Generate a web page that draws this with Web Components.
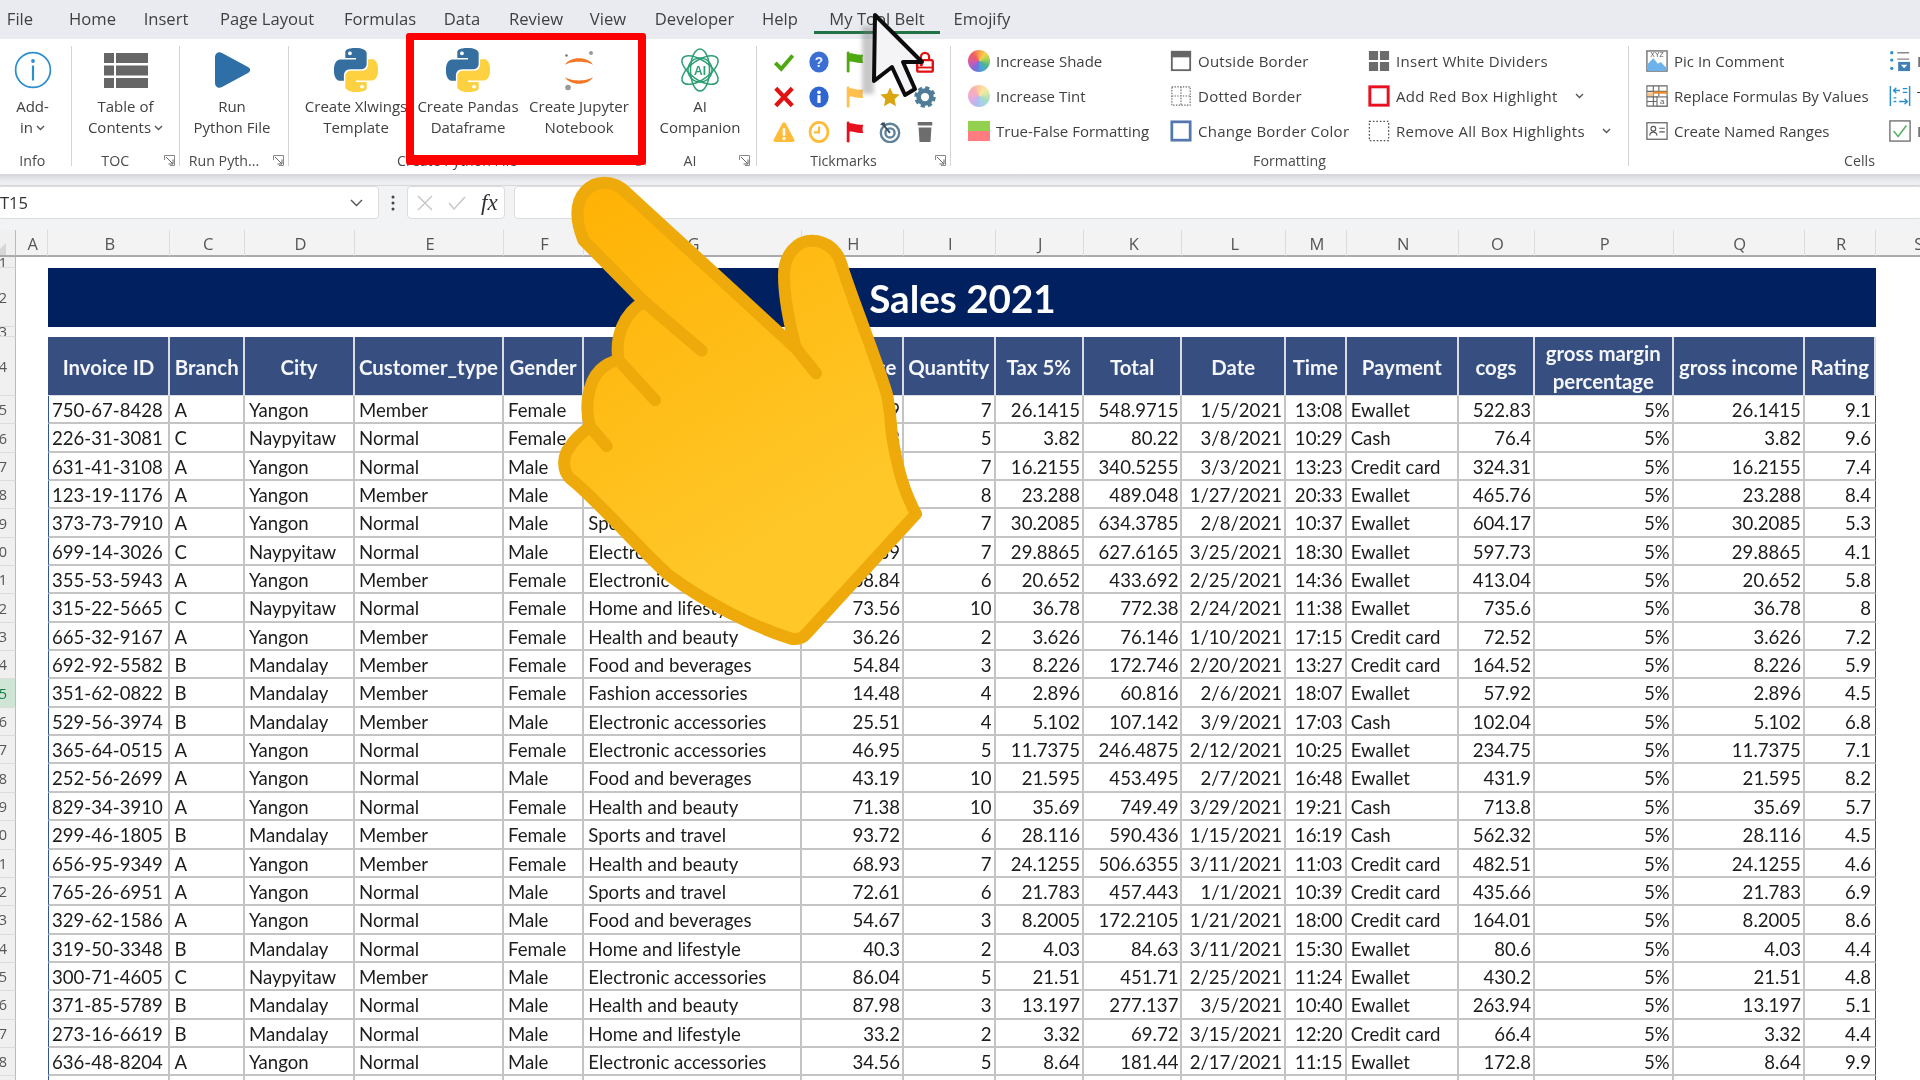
<!DOCTYPE html>
<html>
<head>
<meta charset="utf-8">
<title>Sales 2021</title>
<style>
  html, body { margin: 0; height: 1080px; overflow: hidden; background: #fff; }
  body { position: relative; font-family: "Open Sans", "Liberation Sans", sans-serif; width: 1920px; filter: blur(.35px); }
  .up { vertical-align: 2px; margin-left: 3px; }
</style>
</head>
<body>
<xl-tabs></xl-tabs>

<xl-ribbon>
  <rb-group w="71.5" label="Info" foot-pad="6">
    <rb-big w="65"><xl-icon slot="icon" name="info" w="38" h="38"></xl-icon>Add-<br>in<xl-icon name="chev" w="9" h="6" class="up"></xl-icon></rb-big>
  </rb-group>
  <rb-group w="108.5" label="TOC" launcher>
    <rb-big w="108"><xl-icon slot="icon" name="toc" w="44" h="35"></xl-icon>Table of<br>Contents<xl-icon name="chev" w="9" h="6" class="up"></xl-icon></rb-big>
  </rb-group>
  <rb-group w="109" label="Run Pyth..." launcher>
    <rb-big w="104"><xl-icon slot="icon" name="play" w="36" h="36"></xl-icon>Run<br>Python File</rb-big>
  </rb-group>
  <rb-group w="357" label="Create Python File" launcher pad="11">
    <rb-big w="112"><xl-icon slot="icon" name="python" w="44" h="44"></xl-icon>Create Xlwings<br>Template</rb-big>
    <rb-big w="112"><xl-icon slot="icon" name="python" w="44" h="44"></xl-icon>Create Pandas<br>Dataframe</rb-big>
    <rb-big w="110"><xl-icon slot="icon" name="jupyter" w="30" h="41"></xl-icon>Create Jupyter<br>Notebook</rb-big>
  </rb-group>
  <rb-group w="111" label="AI" launcher pad="0" foot-pad="2">
    <rb-big w="108"><xl-icon slot="icon" name="ai" w="44" h="44"></xl-icon>AI<br>Companion</rb-big>
  </rb-group>
  <rb-group w="194" label="Tickmarks" launcher>
    <rb-ticks>
      <xl-icon name="check"></xl-icon><xl-icon name="help"></xl-icon><xl-icon name="flagGreen"></xl-icon><xl-icon name="flagYellow"></xl-icon><xl-icon name="lock"></xl-icon>
      <xl-icon name="cross"></xl-icon><xl-icon name="infoFill"></xl-icon><xl-icon name="flagYellow"></xl-icon><xl-icon name="star"></xl-icon><xl-icon name="gear"></xl-icon>
      <xl-icon name="warn"></xl-icon><xl-icon name="clock"></xl-icon><xl-icon name="flagRed"></xl-icon><xl-icon name="target"></xl-icon><xl-icon name="trash"></xl-icon>
    </rb-ticks>
  </rb-group>
  <rb-group w="678" label="Formatting" pad="17">
    <rb-col w="202">
      <rb-small><xl-icon slot="icon" name="wheel"></xl-icon>Increase Shade</rb-small>
      <rb-small><xl-icon slot="icon" name="wheelTint"></xl-icon>Increase Tint</rb-small>
      <rb-small><xl-icon slot="icon" name="trueFalse"></xl-icon>True-False Formatting</rb-small>
    </rb-col>
    <rb-col w="198" ls=".25">
      <rb-small><xl-icon slot="icon" name="outside"></xl-icon>Outside Border</rb-small>
      <rb-small><xl-icon slot="icon" name="dotted"></xl-icon>Dotted Border</rb-small>
      <rb-small><xl-icon slot="icon" name="borderColor"></xl-icon>Change Border Color</rb-small>
    </rb-col>
    <rb-col w="250" ls=".3">
      <rb-small><xl-icon slot="icon" name="dividers"></xl-icon>Insert White Dividers</rb-small>
      <rb-small drop><xl-icon slot="icon" name="redBox"></xl-icon>Add Red Box Highlight</rb-small>
      <rb-small drop><xl-icon slot="icon" name="noBox"></xl-icon>Remove All Box Highlights</rb-small>
    </rb-col>
  </rb-group>
  <rb-group w="462" label="Cells" pad="17">
    <rb-col w="243">
      <rb-small><xl-icon slot="icon" name="pic"></xl-icon>Pic In Comment</rb-small>
      <rb-small><xl-icon slot="icon" name="replace"></xl-icon>Replace Formulas By Values</rb-small>
      <rb-small><xl-icon slot="icon" name="named"></xl-icon>Create Named Ranges</rb-small>
    </rb-col>
    <rb-col w="150">
      <rb-small><xl-icon slot="icon" name="list"></xl-icon>I</rb-small>
      <rb-small><xl-icon slot="icon" name="indent"></xl-icon>T</rb-small>
      <rb-small><xl-icon slot="icon" name="tick"></xl-icon>I</rb-small>
    </rb-col>
  </rb-group>
</xl-ribbon>

<xl-formula-bar cell="T15"></xl-formula-bar>
<xl-sheet></xl-sheet>

<red-box></red-box>
<hand-pointer></hand-pointer>
<mouse-cursor></mouse-cursor>

<script>
const pyBlue = 'M14.25.18l.9.2.73.26.59.3.45.32.34.34.25.34.16.33.1.3.04.26.02.2-.01.13V8.5l-.05.63-.13.55-.21.46-.26.38-.3.31-.33.25-.35.19-.35.14-.33.1-.3.07-.26.04-.21.02H8.77l-.69.05-.59.14-.5.22-.41.27-.33.32-.27.35-.2.36-.15.37-.1.35-.07.32-.04.27-.02.21v3.06H3.17l-.21-.03-.28-.07-.32-.12-.35-.18-.36-.26-.36-.36-.35-.46-.32-.59-.28-.73-.21-.88-.14-1.05-.05-1.23.06-1.22.16-1.04.24-.87.32-.71.36-.57.4-.44.42-.33.42-.24.4-.16.36-.1.32-.05.24-.01h.16l.06.01h8.16v-.83H6.18l-.01-2.75-.02-.37.05-.34.11-.31.17-.28.25-.26.31-.23.38-.2.44-.18.51-.15.58-.12.64-.1.71-.06.77-.04.84-.02 1.27.05zm-6.3 1.98l-.23.33-.08.41.08.41.23.34.33.22.41.09.41-.09.33-.22.23-.34.08-.41-.08-.41-.23-.33-.33-.22-.41-.09-.41.09z'
const pyYellow = 'M21.04 6.11l.28.06.32.12.35.18.36.27.36.35.35.47.32.59.28.73.21.88.14 1.04.05 1.23-.06 1.23-.16 1.04-.24.86-.32.71-.36.57-.4.45-.42.33-.42.24-.4.16-.36.09-.32.05-.24.02-.16-.01h-8.22v.82h5.84l.01 2.76.02.36-.05.34-.11.31-.17.29-.25.25-.31.24-.38.2-.44.17-.51.15-.58.13-.64.09-.71.07-.77.04-.84.01-1.27-.04-1.07-.14-.9-.2-.73-.25-.59-.3-.45-.33-.34-.34-.25-.34-.16-.33-.1-.3-.04-.25-.02-.2.01-.13v-5.34l.05-.64.13-.54.21-.46.26-.38.3-.32.33-.24.35-.2.35-.14.33-.1.3-.06.26-.04.21-.02.13-.01h5.84l.69-.05.59-.14.5-.21.41-.28.33-.32.27-.35.2-.36.15-.36.1-.35.07-.32.04-.28.02-.21V6.07h2.09l.14.01zm-6.47 14.25l-.23.33-.08.41.08.41.23.33.33.23.41.08.41-.08.33-.23.23-.33.08-.41-.08-.41-.23-.33-.33-.23-.41-.08-.41.08z'
const flag = c => `<path d="M4.5 2v20" stroke="${c}" stroke-width="3" stroke-linecap="round"/><path d="M5 3c4-2 7 2 16 1-1 3-1 6 0 9-8 1-12-3-16-1z" fill="${c}"/>`
const wheel = stops => `<foreignObject width="24" height="24"><div xmlns="http://www.w3.org/1999/xhtml" style="width:24px;height:24px;border-radius:50%;background:conic-gradient(${stops})"></div></foreignObject>`

const ICONS = {
  chev: ['0 0 9 6', '<path d="M1 1l3.5 3.5L8 1" fill="none" stroke="#555" stroke-width="1.4"/>'],
  info: ['0 0 38 38', '<circle cx="19" cy="19" r="17.4" fill="#fff" stroke="#2b8fce" stroke-width="1.7"/><circle cx="19" cy="10" r="1.9" fill="#2b8fce"/><rect x="17.9" y="14.5" width="2.2" height="15" fill="#2b8fce"/>'],
  toc: ['0 0 44 35', '<path fill="#666" d="M0 0h10v10H0zM12 0h32v10H12zM0 12.5h10v10H0zM12 12.5h32v10H12zM0 25h10v10H0zM12 25h32v10H12z"/>'],
  play: ['0 0 36 36', '<path fill="#2f6fa8" d="M1 5c0-4 4-6 7-4l26 14c3 2 3 4 0 6L8 35c-3 2-7 0-7-4z"/>'],
  python: ['0 0 24 24', `<path fill="#356f9f" fill-rule="evenodd" d="${pyBlue}"/><path fill="#fdd140" fill-rule="evenodd" d="${pyYellow}"/>`],
  jupyter: ['0 0 30 41', '<path fill="#f37726" d="M1 15C5 6 25 6 29 15 24 10.5 6 10.5 1 15zM1 27c5 4.5 23 4.5 28 0-4 9-24 9-28 0z"/><circle cx="27" cy="3" r="2" fill="#9a9a9a"/><circle cx="2.5" cy="5.5" r="1.3" fill="#777"/><circle cx="4" cy="37.5" r="2.8" fill="#9a9a9a"/>'],
  ai: ['0 0 44 44', '<g fill="none" stroke="#2e9f73" stroke-width="1.5"><ellipse cx="22" cy="22" rx="21" ry="9.5" transform="rotate(35 22 22)"/><ellipse cx="22" cy="22" rx="21" ry="9.5" transform="rotate(90 22 22)"/><ellipse cx="22" cy="22" rx="21" ry="9.5" transform="rotate(145 22 22)"/><circle cx="22" cy="22" r="12"/></g><text x="22" y="26.5" font-family="Liberation Sans" font-size="12" font-weight="700" fill="#2e9f73" text-anchor="middle">AI</text>'],
  check: ['0 0 24 24', '<path d="M2.5 13l6.5 6.5L21.5 5" fill="none" stroke="#4ea80f" stroke-width="4.2"/>'],
  help: ['0 0 24 24', '<ellipse cx="12" cy="12" rx="10.5" ry="11.5" fill="#3b6fd4"/><text x="12" y="17.5" font-family="Liberation Sans" font-size="15" font-weight="700" fill="#e8eefc" text-anchor="middle">?</text>'],
  infoFill: ['0 0 24 24', '<ellipse cx="12" cy="12" rx="10.5" ry="11.5" fill="#2f66cf"/><circle cx="12" cy="6.8" r="2" fill="#fff"/><rect x="10.3" y="10" width="3.4" height="8.5" fill="#fff"/>'],
  flagGreen: ['0 0 24 24', flag('#4ea80f')],
  flagYellow: ['0 0 24 24', flag('#ffc04d')],
  flagRed: ['0 0 24 24', flag('#e80f1e')],
  cross: ['0 0 24 24', '<path d="M3 2.5l18 19M21 2.5l-18 19" stroke="#e01212" stroke-width="4.6"/>'],
  lock: ['0 0 24 24', '<path d="M7.5 10V6.5a4.5 4.5 0 0 1 9 0V10" fill="none" stroke="#e01212" stroke-width="2.4"/><rect x="3.5" y="10" width="17" height="12.5" rx="1.5" fill="#fff" stroke="#e01212" stroke-width="2.6"/><circle cx="8" cy="15" r="1.8" fill="#e01212"/><rect x="3.5" y="17" width="17" height="2" fill="#e01212"/>'],
  star: ['0 0 24 24', '<path fill="#d9a510" d="M12 1.5l3.2 6.9 7.3.9-5.4 5.1 1.4 7.6-6.5-3.7-6.5 3.7 1.4-7.6L1.5 9.3l7.3-.9z"/>'],
  gear: ['0 0 24 24', '<circle cx="12" cy="12" r="10" fill="none" stroke="#4f7d98" stroke-width="3.5" stroke-dasharray="4.5 3.35"/><circle cx="12" cy="12" r="7" fill="none" stroke="#4f7d98" stroke-width="5"/>'],
  warn: ['0 0 24 24', '<path fill="#ffbb3a" d="M10.2 2.5c.9-1.6 2.7-1.6 3.6 0l9.3 17.5c.8 1.5-.2 3-1.8 3H2.7c-1.6 0-2.6-1.5-1.8-3z"/><rect x="10.6" y="8" width="2.8" height="8" fill="#fff"/><circle cx="12" cy="19" r="1.7" fill="#fff"/>'],
  clock: ['0 0 24 24', '<ellipse cx="12" cy="12" rx="9.8" ry="10.5" fill="none" stroke="#ffbb3a" stroke-width="3"/><path d="M12 6v6.5H6.5" fill="none" stroke="#ffbb3a" stroke-width="2.4"/>'],
  target: ['0 0 24 24', '<circle cx="12" cy="13" r="10" fill="none" stroke="#5f8199" stroke-width="2.6"/><circle cx="12" cy="13" r="5" fill="none" stroke="#5f8199" stroke-width="2.6"/><path d="M12 13L3 2" stroke="#3a4f5f" stroke-width="2"/><path d="M1 4l5-3 1 4z" fill="#3a4f5f"/>'],
  trash: ['0 0 24 24', '<rect x="4" y="1" width="16" height="4" rx="1" fill="#6d6d6d"/><path fill="#6d6d6d" d="M5 7h14l-1 16H6z"/>'],
  wheel: ['0 0 24 24', wheel('#f6a04d,#f7d14a,#a6d25a,#4db58c,#4da3d8,#6f70d8,#b45ec8,#e45a8c,#ef5f5f,#f6a04d')],
  wheelTint: ['0 0 24 24', wheel('#fbcf9f,#fbe89f,#d2e8a8,#a6dcc5,#a6d1ec,#b7b8ec,#d9aee4,#f2accc,#f7afaf,#fbcf9f')],
  trueFalse: ['0 0 24 24', '<rect width="24" height="11" y="1" fill="#92d050"/><rect width="24" height="11" y="12" fill="#ff7c80"/>'],
  outside: ['0 0 24 24', '<rect x="2" y="2" width="20" height="20" fill="#fff" stroke="#666" stroke-width="2"/><rect x="1" y="1" width="22" height="7" fill="#666"/>'],
  dotted: ['0 0 24 24', '<path d="M2 2h20v20H2zM12 2v20M2 12h20" fill="none" stroke="#666" stroke-width="1.2" stroke-dasharray="1.5 1.5"/>'],
  borderColor: ['0 0 24 24', '<rect x="2" y="2" width="20" height="20" fill="#fff" stroke="#5478ad" stroke-width="3"/>'],
  dividers: ['0 0 24 24', '<path fill="#6b6b6b" d="M1 1h10v10H1zM13 1h10v10H13zM1 13h10v10H1zM13 13h10v10H13z"/>'],
  redBox: ['0 0 24 24', '<rect x="2" y="2" width="20" height="20" fill="#fff" stroke="#e8101e" stroke-width="3.2"/>'],
  noBox: ['0 0 24 24', '<rect x="1.5" y="1.5" width="21" height="21" fill="none" stroke="#555" stroke-width="1.4" stroke-dasharray="1.8 2"/>'],
  pic: ['0 0 24 24', '<rect x="1" y="1" width="22" height="22" fill="#fff" stroke="#666" stroke-width="1.4"/><path fill="#6db2ea" d="M2 23v-8l6-6 5 6 3-2 6 6v4z"/><text x="12" y="7.5" font-family="Liberation Sans" font-size="7.5" fill="#555" text-anchor="middle">XYZ</text>'],
  replace: ['0 0 24 24', '<path d="M1 1h22v22H1zM1 7h22M1 13h12M1 18h12M8 1v22M14 1v11" fill="none" stroke="#666" stroke-width="1.2"/><rect x="8" y="7" width="15" height="2.5" fill="#ed8b2c"/><rect x="2" y="8" width="6" height="4" fill="#f6c48a"/><rect x="12" y="13" width="11" height="10" fill="#fff" stroke="#666" stroke-width="1.2"/><text x="17.5" y="21" font-family="Liberation Sans" font-size="8.5" fill="#555" text-anchor="middle">a</text>'],
  named: ['0 0 24 24', '<rect x="1" y="3" width="22" height="18" fill="#fff" stroke="#666" stroke-width="1.4"/><circle cx="8" cy="9.5" r="2.6" fill="none" stroke="#555" stroke-width="1.2"/><path d="M4 17c.5-5 7.5-5 8 0" fill="none" stroke="#555" stroke-width="1.2"/><path d="M14.5 9h6M14.5 13h6" stroke="#555" stroke-width="1.2"/>'],
  list: ['0 0 24 24', '<circle cx="3" cy="3" r="1.8" fill="#2b8fce"/><circle cx="3" cy="11" r="1.8" fill="#2b8fce"/><circle cx="3" cy="20" r="1.8" fill="#2b8fce"/><path d="M9 3h13M9 10h13" stroke="#888" stroke-width="1.5"/><path fill="#3f7fb5" d="M10 13h13v10H10z"/><path fill="#fff" d="M13 16h7l-3.5 4z"/>'],
  indent: ['0 0 24 24', '<path d="M1.5 1v22M22.5 1v22" stroke="#2b8fce" stroke-width="1.6"/><path d="M5 6h7M8 3L5 6l3 3M15 4h5M15 8h5M5 14h3M5 18h3M11 18h9M17 15l3 3-3 3" fill="none" stroke="#2b8fce" stroke-width="1.5"/>'],
  tick: ['0 0 24 24', '<rect x="1" y="1" width="22" height="22" fill="#fff" stroke="#666" stroke-width="1.4"/><path d="M5 12l5 6 9-12" fill="none" stroke="#58b368" stroke-width="1.8"/>']
}

class XlIcon extends HTMLElement {
  connectedCallback() {
    const w = this.getAttribute('w') || 22
    const h = this.getAttribute('h') || w
    const [box, body] = ICONS[this.getAttribute('name')]
    this.attachShadow({ mode: 'open' }).innerHTML = `
      <style>:host { display: inline-block; width: ${w}px; height: ${h}px; line-height: 0; } svg { width: 100%; height: 100%; display: block; }</style>
      <svg viewBox="${box}" preserveAspectRatio="none">${body}</svg>`
  }
}

const TABS = [['File', 40, 12], ['Home', 81], ['Insert', 66], ['Page Layout', 136], ['Formulas', 90], ['Data', 74], ['Review', 74], ['View', 70], ['Developer', 103], ['Help', 68], ['My Tool Belt', 126], ['Emojify', 84]]

class XlTabs extends HTMLElement {
  connectedCallback() {
    const tabs = TABS.map(([t, w, m]) =>
      `<div class="tab${t === 'My Tool Belt' ? ' on' : ''}" style="width:${w}px;margin-right:${m || 0}px">${t}</div>`).join('')
    this.attachShadow({ mode: 'open' }).innerHTML = `
      <style>
        :host { display: flex; height: 39px; background: #e9ebf0; color: #3f3f3f; font: 16.6px "Open Sans", sans-serif; }
        .tab { height: 34px; line-height: 38px; text-align: center; box-sizing: border-box; white-space: nowrap; }
        .on { border-bottom: 3px solid #217346; }
      </style>${tabs}`
  }
}

class XlRibbon extends HTMLElement {
  constructor() {
    super()
    this.attachShadow({ mode: 'open' }).innerHTML = `
      <style>
        :host { display: flex; height: 135px; width: 1920px; overflow: hidden; background: #fff; color: #404040; font: 15px/21px "Open Sans", sans-serif; position: relative; }
      </style><slot></slot>`
  }
}

class RbGroup extends HTMLElement {
  connectedCallback() {
    const launcher = this.hasAttribute('launcher')
    this.attachShadow({ mode: 'open' }).innerHTML = `
      <style>
        :host { display: block; flex: none; width: ${this.getAttribute('w')}px; height: 135px; }
        .box { height: 120px; margin-top: 7px; border-right: 1px solid #d4d4d4; display: flex; flex-direction: column; box-sizing: border-box; }
        .body { flex: 1; display: flex; padding-left: ${this.getAttribute('pad') || 0}px; min-height: 0; }
        .foot { flex: none; height: 20px; margin-bottom: -4px; display: flex; align-items: center; color: #4a4a4a; font-size: 14.2px; white-space: nowrap; padding-right: ${this.getAttribute('foot-pad') || 0}px; }
        .foot span { flex: 1; text-align: center; }
        .launch { flex: none; width: 20px; height: 20px; display: flex; align-items: center; justify-content: center; }
      </style>
      <div class="box">
        <div class="body"><slot></slot></div>
        <div class="foot"><span>${this.getAttribute('label')}</span>
          ${launcher ? '<div class="launch"><svg width="11" height="11" viewBox="0 0 11 11" fill="none" stroke="#666"><path d="M.5 5V.5H10.5V10.5H6" stroke="#888"/><path d="M2 2l7 7M4.5 9H9V4.5"/></svg></div>' : ''}
        </div>
      </div>`
  }
}

class RbBig extends HTMLElement {
  connectedCallback() {
    this.attachShadow({ mode: 'open' }).innerHTML = `
      <style>
        :host { display: flex; flex: none; flex-direction: column; align-items: center; width: ${this.getAttribute('w')}px; padding-top: 2px; }
        .ic { height: 44px; display: flex; align-items: center; justify-content: center; }
        .tx { margin-top: 4px; text-align: center; white-space: nowrap; line-height: 21px; }
      </style>
      <div class="ic"><slot name="icon"></slot></div>
      <div class="tx"><slot></slot></div>`
  }
}

class RbCol extends HTMLElement {
  connectedCallback() {
    this.attachShadow({ mode: 'open' }).innerHTML = `
      <style>:host { display: flex; flex: none; flex-direction: column; width: ${this.getAttribute('w')}px; margin-top: -2.5px; letter-spacing: ${this.getAttribute('ls') || 0}px; }</style><slot></slot>`
  }
}

class RbSmall extends HTMLElement {
  connectedCallback() {
    const drop = this.hasAttribute('drop')
    this.attachShadow({ mode: 'open' }).innerHTML = `
      <style>
        :host { display: flex; align-items: center; height: 35px; white-space: nowrap; }
        .ic { width: 22px; height: 22px; margin-right: 6px; flex: none; }
        svg { margin-left: 17px; }
      </style>
      <div class="ic"><slot name="icon"></slot></div><slot></slot>
      ${drop ? '<svg width="9" height="6" viewBox="0 0 9 6"><path d="M1 1l3.5 3.5L8 1" fill="none" stroke="#555" stroke-width="1.4"/></svg>' : ''}`
  }
}

class RbTicks extends HTMLElement {
  constructor() {
    super()
    this.attachShadow({ mode: 'open' }).innerHTML = `
      <style>
        :host { display: grid; grid-template-columns: repeat(5, 35.3px); grid-auto-rows: 35px; place-items: center; margin: -1.5px 0 0 9.5px; }
      </style><slot></slot>`
  }
}

class XlFormulaBar extends HTMLElement {
  connectedCallback() {
    this.attachShadow({ mode: 'open' }).innerHTML = `
      <style>
        :host { display: block; height: 56px; background: #f2f3f5; font-family: "Open Sans", sans-serif; color: #333; box-sizing: border-box; }
        .shade { height: 12px; background: linear-gradient(#d4d5d9, #eceef1 70%); border-bottom: 1px solid #d8d8da; box-sizing: border-box; }
        .row { display: flex; height: 33px; }
        .box { background: #fff; border: 1px solid #dcdcdc; border-radius: 4px; box-sizing: border-box; height: 33px; display: flex; align-items: center; }
        .name { width: 381px; margin-left: -2px; flex: none; padding-left: 1px; font-size: 16.5px; }
        .name svg { margin-left: auto; margin-right: 15px; }
        .dots { width: 28px; display: flex; justify-content: center; align-items: center; }
        .fn { width: 98px; flex: none; }
        .fn i { font: italic 400 23px "Liberation Serif", serif; color: #333; margin-left: 15px; }
        .fx { flex: 1; margin: 0 -2px 0 8.5px; }
      </style>
      <div class="shade"></div>
      <div class="row">
        <div class="box name"><span>${this.getAttribute('cell')}</span>
          <svg width="13" height="8" viewBox="0 0 13 8"><path d="M1 1l5.5 5.5L12 1" fill="none" stroke="#555" stroke-width="1.4"/></svg></div>
        <div class="dots"><svg width="4" height="16" viewBox="0 0 4 16"><g fill="#444"><circle cx="2" cy="2" r="1.5"/><circle cx="2" cy="8" r="1.5"/><circle cx="2" cy="14" r="1.5"/></g></svg></div>
        <div class="box fn">
          <svg width="16" height="16" viewBox="0 0 16 16" style="margin-left:9px"><path d="M1 1l14 14M15 1L1 15" stroke="#c8c8c8" stroke-width="1.5"/></svg>
          <svg width="18" height="14" viewBox="0 0 18 14" style="margin-left:15px"><path d="M1 7l5 6L17 1" fill="none" stroke="#c8c8c8" stroke-width="1.5"/></svg>
          <i>fx</i>
        </div>
        <div class="box fx"></div>
      </div>`
  }
}

const COL_W = [16, 32.4, 122.1, 74.5, 110, 149, 80.3, 217.4, 102.3, 91.6, 88.4, 98.5, 103.5, 60.7, 112.3, 76, 138.7, 131.3, 71.5, 83.5]
const COL_L = 'ABCDEFGHIJKLMNOPQRS'.split('')
const HEAD = ['Invoice ID', 'Branch', 'City', 'Customer_type', 'Gender', 'Product line', 'Unit price', 'Quantity', 'Tax 5%', 'Total', 'Date', 'Time', 'Payment', 'cogs', 'gross margin<br>percentage', 'gross income', 'Rating']
const ALIGN_BY_COL = ['l', 'l', 'l', 'l', 'l', 'l', 'r', 'r', 'r', 'r', 'r', 'r', 'l', 'r', 'r', 'r', 'r']
const DATA = `750-67-8428|A|Yangon|Member|Female|Health and beauty|74.69|7|26.1415|548.9715|1/5/2021|13:08|Ewallet|522.83|5%|26.1415|9.1
226-31-3081|C|Naypyitaw|Normal|Female|Electronic accessories|15.28|5|3.82|80.22|3/8/2021|10:29|Cash|76.4|5%|3.82|9.6
631-41-3108|A|Yangon|Normal|Male|Home and lifestyle|46.33|7|16.2155|340.5255|3/3/2021|13:23|Credit card|324.31|5%|16.2155|7.4
123-19-1176|A|Yangon|Member|Male|Health and beauty|58.22|8|23.288|489.048|1/27/2021|20:33|Ewallet|465.76|5%|23.288|8.4
373-73-7910|A|Yangon|Normal|Male|Sports and travel|86.31|7|30.2085|634.3785|2/8/2021|10:37|Ewallet|604.17|5%|30.2085|5.3
699-14-3026|C|Naypyitaw|Normal|Male|Electronic accessories|85.39|7|29.8865|627.6165|3/25/2021|18:30|Ewallet|597.73|5%|29.8865|4.1
355-53-5943|A|Yangon|Member|Female|Electronic accessories|68.84|6|20.652|433.692|2/25/2021|14:36|Ewallet|413.04|5%|20.652|5.8
315-22-5665|C|Naypyitaw|Normal|Female|Home and lifestyle|73.56|10|36.78|772.38|2/24/2021|11:38|Ewallet|735.6|5%|36.78|8
665-32-9167|A|Yangon|Member|Female|Health and beauty|36.26|2|3.626|76.146|1/10/2021|17:15|Credit card|72.52|5%|3.626|7.2
692-92-5582|B|Mandalay|Member|Female|Food and beverages|54.84|3|8.226|172.746|2/20/2021|13:27|Credit card|164.52|5%|8.226|5.9
351-62-0822|B|Mandalay|Member|Female|Fashion accessories|14.48|4|2.896|60.816|2/6/2021|18:07|Ewallet|57.92|5%|2.896|4.5
529-56-3974|B|Mandalay|Member|Male|Electronic accessories|25.51|4|5.102|107.142|3/9/2021|17:03|Cash|102.04|5%|5.102|6.8
365-64-0515|A|Yangon|Normal|Female|Electronic accessories|46.95|5|11.7375|246.4875|2/12/2021|10:25|Ewallet|234.75|5%|11.7375|7.1
252-56-2699|A|Yangon|Normal|Male|Food and beverages|43.19|10|21.595|453.495|2/7/2021|16:48|Ewallet|431.9|5%|21.595|8.2
829-34-3910|A|Yangon|Normal|Female|Health and beauty|71.38|10|35.69|749.49|3/29/2021|19:21|Cash|713.8|5%|35.69|5.7
299-46-1805|B|Mandalay|Member|Female|Sports and travel|93.72|6|28.116|590.436|1/15/2021|16:19|Cash|562.32|5%|28.116|4.5
656-95-9349|A|Yangon|Member|Female|Health and beauty|68.93|7|24.1255|506.6355|3/11/2021|11:03|Credit card|482.51|5%|24.1255|4.6
765-26-6951|A|Yangon|Normal|Male|Sports and travel|72.61|6|21.783|457.443|1/1/2021|10:39|Credit card|435.66|5%|21.783|6.9
329-62-1586|A|Yangon|Normal|Male|Food and beverages|54.67|3|8.2005|172.2105|1/21/2021|18:00|Credit card|164.01|5%|8.2005|8.6
319-50-3348|B|Mandalay|Normal|Female|Home and lifestyle|40.3|2|4.03|84.63|3/11/2021|15:30|Ewallet|80.6|5%|4.03|4.4
300-71-4605|C|Naypyitaw|Member|Male|Electronic accessories|86.04|5|21.51|451.71|2/25/2021|11:24|Ewallet|430.2|5%|21.51|4.8
371-85-5789|B|Mandalay|Normal|Male|Health and beauty|87.98|3|13.197|277.137|3/5/2021|10:40|Ewallet|263.94|5%|13.197|5.1
273-16-6619|B|Mandalay|Normal|Male|Home and lifestyle|33.2|2|3.32|69.72|3/15/2021|12:20|Credit card|66.4|5%|3.32|4.4
636-48-8204|A|Yangon|Normal|Male|Electronic accessories|34.56|5|8.64|181.44|2/17/2021|11:15|Ewallet|172.8|5%|8.64|9.9`.split('\n').map(l => l.split('|'))

class XlSheet extends HTMLElement {
  connectedCallback() {
    const rowHead = (n, on) => `<div class="rh${on ? ' sel' : ''}"><span>${n}</span></div>`
    let cells = '<div class="corner"></div>'
    cells += COL_L.map(c => `<div class="ch">${c}</div>`).join('')
    cells += rowHead(1) + '<div class="blank" style="grid-column:span 19"></div>'
    cells += rowHead(2) + '<div class="blank"></div><div class="title" style="grid-column:span 17">Sales 2021</div><div class="blank"></div>'
    cells += rowHead(3) + '<div class="blank" style="grid-column:span 19"></div>'
    cells += rowHead(4) + '<div class="blank"></div>'
    cells += HEAD.map(h => `<div class="th">${h}</div>`).join('') + '<div class="blank"></div>'
    DATA.forEach((row, r) => {
      cells += rowHead(r + 5, r + 5 === 15) + '<div class="blank"></div>'
      cells += row.map((v, i) => `<div class="td ${ALIGN_BY_COL[i]}${i === 0 ? ' first' : ''}${i === 16 ? ' last' : ''}">${v}</div>`).join('')
      cells += '<div class="blank"></div>'
    })
    cells += rowHead(29) + '<div class="blank"></div>' + HEAD.map((h, i) => `<div class="td${i === 0 ? ' first' : ''}${i === 16 ? ' last' : ''}"></div>`).join('')
    this.attachShadow({ mode: 'open' }).innerHTML = `
      <style>
        :host { display: block; height: 850px; overflow: hidden; background: #fff; font-family: Lato, "Liberation Sans", sans-serif; }
        .grid { display: grid; width: 1960px;
          grid-template-columns: ${COL_W.map(w => w + 'px').join(' ')};
          grid-template-rows: 27px 11px 59px 10px 59px repeat(25, 28.35px); }
        .grid > div { box-sizing: border-box; min-width: 0; white-space: nowrap; }
        .corner { background: #f0f0f0; border-right: 1px solid #bbb; border-bottom: 2px solid #aaa; position: relative; overflow: hidden; }
        .corner::after { content: ""; position: absolute; left: -6px; bottom: 0; border: 6px solid transparent; border-right-color: #d6d6d6; border-bottom-color: #d6d6d6; }
        .ch { background: #f3f3f3; border-right: 1px solid #dcdcdc; border-bottom: 2px solid #aaa; text-align: center; padding: 1px 0 0 2px; font: 16.5px/25px "Open Sans", sans-serif; color: #555; }
        .rh { background: #f0f0f0; border-right: 1px solid #bbb; border-bottom: 1px solid #dcdcdc; display: flex; justify-content: flex-end; align-items: center; overflow: hidden; font: 14.5px "Open Sans", sans-serif; color: #555; padding-right: 8px; }
        .rh span { flex: none; }
        .sel { background: #cfe6d6; color: #107c41; }
        .title { background: #002060; color: #fff; font-weight: 700; font-size: 38.6px; display: flex; align-items: center; justify-content: center; }
        .th { background: #364e80; color: #f4f6fa; font-weight: 700; font-size: 20.4px; line-height: 28px; display: flex; align-items: center; justify-content: center; text-align: center; border-right: 2px solid #d9dde3; border-bottom: 1px solid #d9dde3; padding-top: 1px; }
        .td { border-right: 2px solid #c4c4c4; border-bottom: 2px solid #c4c4c4; font-size: 18.6px; line-height: 26px; padding: 1px 4px 0; color: #1c1c1c; overflow: hidden; }
        .r { text-align: right; padding-right: 2px; padding-left: 0; }
        .first { border-left: 1.5px solid #2f5597; padding-left: 2.5px; }
        .last { border-right: 1.5px solid #2f5597; padding-right: 4.5px; }
      </style>
      <div class="grid">${cells}</div>`
  }
}

class RedBox extends HTMLElement {
  constructor() {
    super()
    this.attachShadow({ mode: 'open' }).innerHTML = `
      <style>:host { position: absolute; left: 406px; top: 33px; width: 240px; height: 132px; box-sizing: border-box; border: solid #fe0000; border-width: 7px 8px 10px 8px; border-radius: 3px; }</style>`
  }
}

class HandPointer extends HTMLElement {
  constructor() {
    super()
    this.attachShadow({ mode: 'open' }).innerHTML = `
      <style>:host { position: absolute; left: 540px; top: 160px; width: 440px; height: 520px; } svg { width: 100%; height: 100%; display: block; }</style>
      <svg viewBox="0 0 1320 1560">
        <defs><linearGradient id="g" x1="150" y1="100" x2="750" y2="1100" gradientUnits="userSpaceOnUse"><stop offset="0" stop-color="#ffb205"/><stop offset="1" stop-color="#ffc728"/></linearGradient></defs>
        <g fill="url(#g)" stroke="#eeaa0a" stroke-width="36" stroke-linejoin="round" stroke-linecap="round">
          <path d="M112 160C112 105 150 68 192 68C222 68 245 82 262 100L768 565C745 480 732 400 732 345C732 285 770 242 815 242C862 242 895 275 905 315C930 400 1000 570 1040 700C1055 770 1050 800 1060 850C1075 930 1090 990 1128 1062L800 1420C785 1438 770 1440 750 1435C640 1400 500 1330 388 1247C340 1205 280 1140 218 1077C170 1030 130 985 90 955C62 925 72 880 90 860C105 835 130 815 150 800C135 750 140 670 180 630C195 615 215 605 235 600C225 530 250 460 312 425L130 240C120 215 112 190 112 160Z"/>
          <path fill="none" d="M312 425L485 572M235 600L345 720M150 800L200 858M768 565L828 640"/>
        </g>
      </svg>`
  }
}

class MouseCursor extends HTMLElement {
  constructor() {
    super()
    this.attachShadow({ mode: 'open' }).innerHTML = `
      <style>:host { position: absolute; left: 855px; top: 5px; width: 80px; height: 100px; } svg { width: 100%; height: 100%; display: block; overflow: visible; }</style>
      <svg viewBox="855 5 80 100">
        <path d="M862 26h12v68h-12z" fill="#777" opacity=".4" style="filter: blur(2px)"/>
        <path d="M875 15L874 81L892 67L905 95L915 89L903 62L922 62Z" fill="#f4f4f6" stroke="#0c0c0c" stroke-width="4" stroke-linejoin="round"/>
      </svg>`
  }
}

customElements.define('xl-icon', XlIcon)
customElements.define('xl-tabs', XlTabs)
customElements.define('xl-ribbon', XlRibbon)
customElements.define('rb-group', RbGroup)
customElements.define('rb-big', RbBig)
customElements.define('rb-col', RbCol)
customElements.define('rb-small', RbSmall)
customElements.define('rb-ticks', RbTicks)
customElements.define('xl-formula-bar', XlFormulaBar)
customElements.define('xl-sheet', XlSheet)
customElements.define('red-box', RedBox)
customElements.define('hand-pointer', HandPointer)
customElements.define('mouse-cursor', MouseCursor)
</script>
</body>
</html>
